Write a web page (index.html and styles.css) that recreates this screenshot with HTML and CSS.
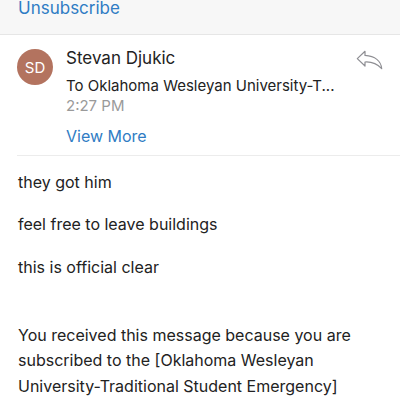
FILE: index.html
```html
<!DOCTYPE html>
<html lang="en">
<head>
  <meta charset="UTF-8" />
  <meta name="viewport" content="width=device-width, initial-scale=1.0"/>
  <title>Message</title>
  <link rel="stylesheet" href="styles.css">
</head>
<body>

  <div class="unsub-bar">
    <a class="unsub-link" href="#">Unsubscribe</a>
  </div>

  <div class="msg-head">
    <div class="avatar">SD</div>
    <div class="meta">
      <div class="sender">Stevan Djukic</div>
      <div class="to">To Oklahoma Wesleyan University-T...</div>
      <div class="time">2:27 PM</div>
      <a class="view-more" href="#">View More</a>
    </div>
    <svg class="reply" width="28" height="24" viewBox="0 0 28 24" fill="none" stroke="#8e8e93" stroke-width="1.2" stroke-linejoin="round">
      <path d="M9 2.3 L1.3 9.6 L9 17 L9 13 C15 12.6 21 14.6 25.7 19.7 C25 12 19 7 9 6.4 Z"/>
    </svg>
  </div>

  <div class="msg-body">
    <p>they got him</p>
    <p>feel free to leave buildings</p>
    <p>this is official clear</p>
    <p class="footer-note">You received this message because you are subscribed to the [Oklahoma Wesleyan University-Traditional Student Emergency]</p>
  </div>

</body>
</html>
```

FILE: styles.css
```css
* { box-sizing: border-box; margin: 0; padding: 0; }
body, html {
  width: 100%;
  height: 100%;
  background: #fff;
  overflow: hidden;
  font-family: Inter, "Liberation Sans", sans-serif;
  color: #222;
}

a { text-decoration: none; }

.unsub-bar {
  height: 37px;
  background: #f7f7f7;
  border-bottom: 1px solid #e6e6e6;
  padding: 0 18px;
}

.unsub-link {
  display: block;
  margin-top: -2px;
  font-size: 17px;
  line-height: 20px;
  color: #2f7cc4;
}

.msg-head {
  display: flex;
  align-items: flex-start;
  margin-left: 17px;
  padding: 12px 0 9px 0;
  border-bottom: 1px solid #ececec;
}

.avatar {
  width: 36px;
  height: 36px;
  border-radius: 50%;
  background: #b3735f;
  color: #fff;
  font-size: 15px;
  display: flex;
  align-items: center;
  justify-content: center;
  flex-shrink: 0;
  margin-top: 2px;
}

.meta {
  flex: 1;
  margin-left: 13px;
}

.sender {
  font-size: 17px;
  line-height: 22px;
}

.to {
  font-size: 15px;
  line-height: 20px;
  margin-top: 6.5px;
}

.time {
  font-size: 15px;
  line-height: 20px;
  margin-top: 0.5px;
  color: #9a9a9a;
}

.view-more {
  display: block;
  font-size: 16px;
  line-height: 20px;
  margin-top: 9.5px;
  color: #2f7cc4;
}

.reply {
  margin: 2px 16px 0 0;
  flex-shrink: 0;
}

.msg-body {
  padding: 15px 18px 0 18px;
}

.msg-body p {
  font-size: 16px;
  line-height: 22px;
  margin-bottom: 20.5px;
}

.msg-body .footer-note {
  margin-top: 45px;
  line-height: 25.5px;
  font-size: 16px;
}
```
